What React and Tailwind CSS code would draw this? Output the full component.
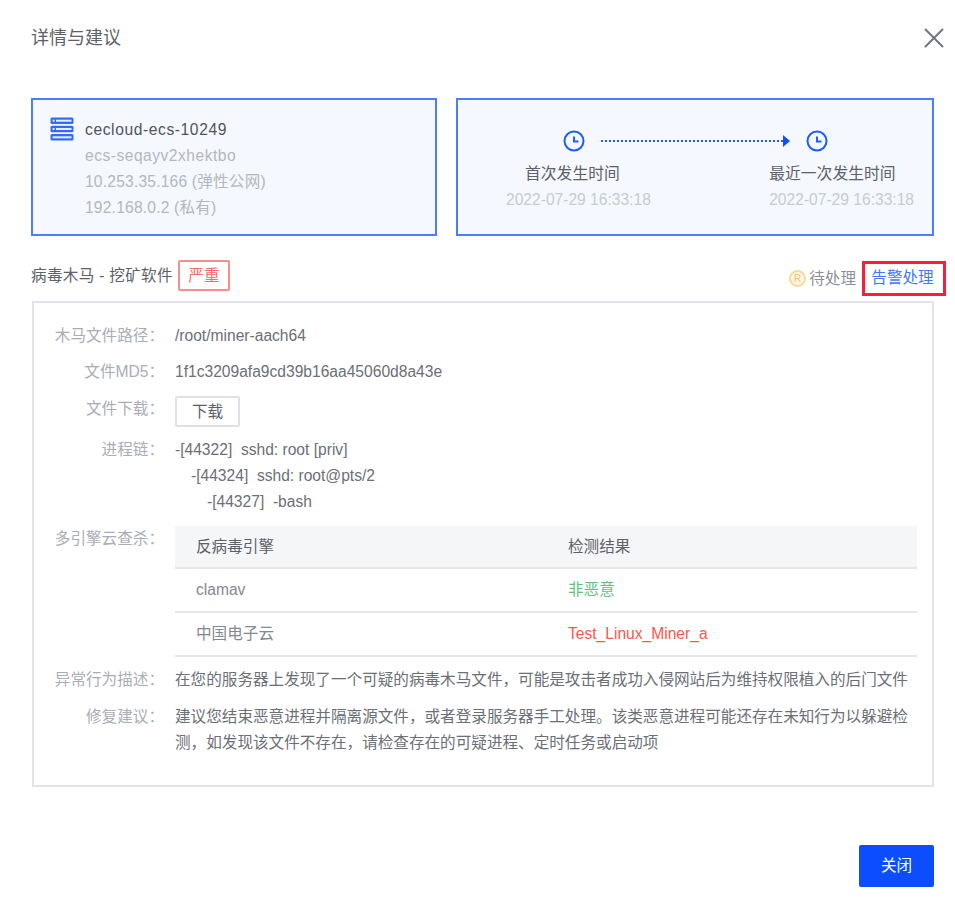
import { X } from "lucide-react";

function Row({ label, className = "", children }) {
  return (
    <div className={`flex ${className}`}>
      <div className="w-[130px] shrink-0 text-right text-[#a9adb5] text-[15.6px] leading-[26px]">{label}</div>
      <div className="ml-[11px] flex-1 min-w-0 text-[#6b6f76] text-[15.6px] leading-[26px]">{children}</div>
    </div>
  );
}

function ServerIcon() {
  return (
    <svg width="24" height="24" viewBox="0 0 24 24" fill="none" className="shrink-0">
      <rect x="0.5" y="0.5" width="23" height="6.4" rx="1.5" fill="#2f6bff" />
      <rect x="0.5" y="8.8" width="23" height="6.4" rx="1.5" fill="#2f6bff" />
      <rect x="0.5" y="17.1" width="23" height="6.4" rx="1.5" fill="#2f6bff" />
      <rect x="6" y="2.7" width="15.5" height="2" fill="#e8eeff" />
      <rect x="6" y="11" width="15.5" height="2" fill="#e8eeff" />
      <rect x="2.5" y="19.3" width="19" height="2" fill="#e8eeff" />
      <rect x="2.6" y="2.7" width="2" height="2" fill="#e8eeff" />
      <rect x="2.6" y="11" width="2" height="2" fill="#e8eeff" />
    </svg>
  );
}

function ClockIcon({ className = "" }) {
  return (
    <svg width="22" height="22" viewBox="0 0 22 22" fill="none" className={`shrink-0 ${className}`}>
      <circle cx="11" cy="11" r="9.5" stroke="#1f5cff" strokeWidth="2" />
      <path d="M11 6.5V11.5H15.5" stroke="#1f5cff" strokeWidth="2" />
    </svg>
  );
}

export default function App() {
  return (
    <div className="w-[955px] h-[910px] bg-white pl-[31px] pr-[21px] font-['Liberation_Sans','Noto_Sans_CJK_SC',sans-serif]">
      <div className="flex items-center justify-between h-[75px]">
        <div className="text-[18px] text-[#5d6168] mt-[2px]">详情与建议</div>
        <X className="w-[34px] h-[34px] text-[#6f7785] mr-[-17px]" strokeWidth={1.4} />
      </div>

      <div className="flex gap-[19px] mt-[23px] h-[138px]">
        <div className="w-[406px] border-2 border-[#4c7dff] bg-[#f5f8ff] pl-[17px] pt-[17px] flex gap-[11px]">
          <ServerIcon />
          <div className="text-[15.6px] leading-[26px] text-[#b4b7bd]">
            <div className="text-[#50545c] tracking-[0.6px]">cecloud-ecs-10249</div>
            <div className="tracking-[0.5px]">ecs-seqayv2xhektbo</div>
            <div className="tracking-[0.2px]">10.253.35.166 (弹性公网)</div>
            <div className="tracking-[0.2px]">192.168.0.2 (私有)</div>
          </div>
        </div>
        <div className="w-[478px] border-2 border-[#4c7dff] bg-[#f5f8ff] flex flex-col pt-[30px] pl-[48px] pr-[18px]">
          <div className="flex items-center ml-[57px]">
            <ClockIcon />
            <div className="w-[182px] ml-[16px] border-t-2 border-dotted border-[#1f5cff]" />
            <div className="w-0 h-0 border-y-[6px] border-y-transparent border-l-[7px] border-l-[#0f4fff]" />
            <ClockIcon className="ml-[16px]" />
          </div>
          <div className="flex justify-between mt-[9px] text-[15.6px] leading-[26px]">
            <div>
              <div className="text-[#5d6168] text-[15.8px] ml-[19px]">首次发生时间</div>
              <div className="text-[#c8cbd2]">2022-07-29 16:33:18</div>
            </div>
            <div>
              <div className="text-[#5d6168] text-[15.8px]">最近一次发生时间</div>
              <div className="text-[#c8cbd2]">2022-07-29 16:33:18</div>
            </div>
          </div>
        </div>
      </div>

      <div className="flex items-start justify-between h-[65px]">
        <div className="flex items-center gap-[5px] mt-[24px]">
          <span className="text-[15.6px] tracking-[0.3px] text-[#5d6168]">病毒木马 - 挖矿软件</span>
          <span className="w-[52px] h-[31px] flex items-center justify-center border-2 border-[#f98d8d] rounded-[2px] text-[15.6px] text-[#fa6a6a]">严重</span>
        </div>
        <div className="flex items-center mr-[-12px] mt-[25px]">
          <span className="w-[17px] h-[17px] rounded-full border-2 border-[#fbd99a] bg-[#fff8e8] text-[#f4bf62] text-[10px] leading-none flex items-center justify-center mr-[3px]">R</span>
          <span className="text-[15.6px] text-[#8b8f96]">待处理</span>
          <span className="ml-[6px] w-[84px] h-[35px] border-[3px] border-[#f5203c] flex items-center justify-center pr-[3px] pb-px text-[15.6px] text-[#3f78f5]">告警处理</span>
        </div>
      </div>

      <div className="ml-px w-[902px] h-[486px] border-2 border-[#e3e4e9] pt-[20px] pr-[15px]">
        <Row label="木马文件路径：">/root/miner-aach64</Row>
        <Row label="文件MD5：" className="mt-[10px]">1f1c3209afa9cd39b16aa45060d8a43e</Row>
        <Row label="文件下载：" className="mt-[11px]">
          <button className="w-[65px] h-[31px] border-2 border-[#dfe1e6] rounded-[2px] text-[15.6px] text-[#5d6168] flex items-center justify-center">下载</button>
        </Row>
        <Row label="进程链：" className="mt-[10px]">
          <div>-[44322]&nbsp;&nbsp;sshd: root [priv]</div>
          <div className="pl-[16px]">-[44324]&nbsp;&nbsp;sshd: root@pts/2</div>
          <div className="pl-[32px]">-[44327]&nbsp;&nbsp;-bash</div>
        </Row>
        <Row label="多引擎云查杀：" className="mt-[11px]">
          <div>
            <div className="grid grid-cols-[372px_1fr] h-[43px] items-center bg-[#f5f6f8] border-b-2 border-[#e6e7eb] pl-[21px] text-[#5d6168]">
              <span>反病毒引擎</span>
              <span>检测结果</span>
            </div>
            <div className="grid grid-cols-[372px_1fr] h-[44px] items-center border-b-2 border-[#e6e7eb] pl-[21px]">
              <span className="text-[#84888f]">clamav</span>
              <span className="text-[#63c27c]">非恶意</span>
            </div>
            <div className="grid grid-cols-[372px_1fr] h-[44px] items-center border-b-2 border-[#e6e7eb] pl-[21px]">
              <span className="text-[#84888f]">中国电子云</span>
              <span className="text-[#f9574a]">Test_Linux_Miner_a</span>
            </div>
          </div>
        </Row>
        <Row label="异常行为描述：" className="mt-[10px]">
          <div className="whitespace-nowrap">在您的服务器上发现了一个可疑的病毒木马文件，可能是攻击者成功入侵网站后为维持权限植入的后门文件</div>
        </Row>
        <Row label="修复建议：" className="mt-[11px]">
          <div>建议您结束恶意进程并隔离源文件，或者登录服务器手工处理。该类恶意进程可能还存在未知行为以躲避检测，如发现该文件不存在，请检查存在的可疑进程、定时任务或启动项</div>
        </Row>
      </div>

      <div className="flex justify-end mt-[58px]">
        <button className="w-[75px] h-[42px] rounded-[2px] bg-[#0b4dff] text-white text-[15.6px]">关闭</button>
      </div>
    </div>
  );
}
